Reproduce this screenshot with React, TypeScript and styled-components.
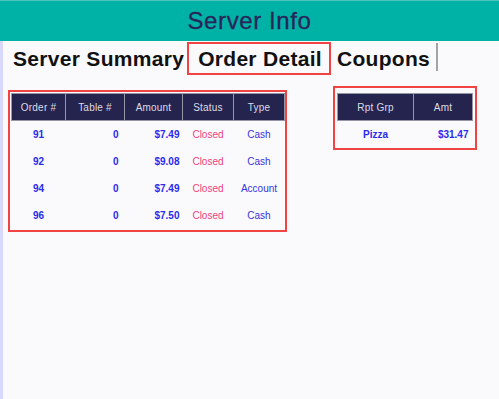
import React from "react";
import styled, { createGlobalStyle } from "styled-components";

const GlobalStyle = createGlobalStyle`
  html, body {
    margin: 0;
    padding: 0;
    background: #fafafd;
    font-family: "Liberation Sans", Arial, sans-serif;
  }
`;

const Page = styled.div`
  display: flex;
  flex-direction: column;
  width: 499px;
  height: 399px;
  overflow: hidden;
`;

const Header = styled.header`
  height: 40px;
  border-top: 1px solid #4cc4bb;
  background: #00b2a6;
  display: flex;
  align-items: center;
  justify-content: center;
`;

const Title = styled.h1`
  margin: 0;
  font-size: 24px;
  font-weight: 400;
  letter-spacing: 0.6px;
  color: #27255a;
  -webkit-text-stroke: 0.3px #27255a;
`;

const Body = styled.main`
  flex: 1;
  border-left: 3px solid #d8d8fc;
`;

const TabRow = styled.nav`
  display: flex;
  align-items: center;
  padding: 1px 0 0 8px;
`;

const Tab = styled.div<{ $active?: boolean }>`
  font-size: 21px;
  font-weight: 700;
  letter-spacing: 0.3px;
  line-height: 29px;
  color: #111;
  border: 2px solid ${(p) => (p.$active ? "#f04444" : "transparent")};
  padding: ${(p) => (p.$active ? "0 7px 0 9px" : "0")};
  margin: ${(p) => (p.$active ? "0 4px 0 1px" : "0")};
`;

const Divider = styled.span`
  width: 2px;
  height: 28px;
  margin: -4px 0 0 4px;
  background: #a4a4a4;
`;

const Tables = styled.section`
  display: flex;
  align-items: flex-start;
  padding: 11px 0 0 5px;
`;

const Frame = styled.div<{ $pad: string; $top?: number; $left?: number }>`
  border: 2px solid #f04444;
  padding: ${(p) => p.$pad};
  margin-top: ${(p) => p.$top ?? 0}px;
  margin-left: ${(p) => p.$left ?? 0}px;
`;

const Grid = styled.table<{ $w: number }>`
  width: ${(p) => p.$w}px;
  border-collapse: collapse;
  table-layout: fixed;
  font-size: 10px;
`;

const Th = styled.th<{ $w?: number }>`
  width: ${(p) => (p.$w ? `${p.$w}px` : "auto")};
  height: 26px;
  padding: 0;
  background: #25244f;
  color: #dcdce6;
  font-weight: 400;
  letter-spacing: 0.2px;
  border: 1px solid #9696a6;
  text-align: center;
`;

const Td = styled.td<{ $align?: string; $pad?: number; $tone?: string; $bold?: boolean }>`
  height: 27px;
  padding: 0 ${(p) => p.$pad ?? 0}px 0 0;
  text-align: ${(p) => p.$align ?? "center"};
  color: ${(p) => p.$tone ?? "#2a2aee"};
  font-weight: ${(p) => (p.$bold ? 700 : 400)};
`;

const orders = [
  { id: "91", table: "0", amount: "$7.49", type: "Cash" },
  { id: "92", table: "0", amount: "$9.08", type: "Cash" },
  { id: "94", table: "0", amount: "$7.49", type: "Account" },
  { id: "96", table: "0", amount: "$7.50", type: "Cash" },
];

const App: React.FC = () => {
  return (
    <Page>
      <GlobalStyle />
      <Header>
        <Title>Server Info</Title>
      </Header>
      <Body>
        <TabRow>
          <Tab>Server Summary</Tab>
          <Tab $active>Order Detail</Tab>
          <Tab>Coupons</Tab>
          <Divider />
        </TabRow>
        <Tables>
          <Frame $pad="1px 0 1px 1px" $top={4}>
            <Grid $w={274}>
              <thead>
                <tr>
                  <Th $w={53}>Order #</Th>
                  <Th $w={58}>Table #</Th>
                  <Th $w={57}>Amount</Th>
                  <Th $w={50}>Status</Th>
                  <Th>Type</Th>
                </tr>
              </thead>
              <tbody>
                {orders.map((o) => (
                  <tr key={o.id}>
                    <Td $bold>{o.id}</Td>
                    <Td $align="right" $pad={6} $bold>{o.table}</Td>
                    <Td $align="right" $pad={3} $bold>{o.amount}</Td>
                    <Td $tone="#f0407a">Closed</Td>
                    <Td $tone="#3434dc">{o.type}</Td>
                  </tr>
                ))}
              </tbody>
            </Grid>
          </Frame>
          <Frame $pad="5px 2px 0 2px" $left={46}>
            <Grid $w={136}>
              <thead>
                <tr>
                  <Th $w={75}>Rpt Grp</Th>
                  <Th>Amt</Th>
                </tr>
              </thead>
              <tbody>
                <tr>
                  <Td $bold>Pizza</Td>
                  <Td $align="right" $pad={4} $bold>$31.47</Td>
                </tr>
              </tbody>
            </Grid>
          </Frame>
        </Tables>
      </Body>
    </Page>
  );
};

export default App;
